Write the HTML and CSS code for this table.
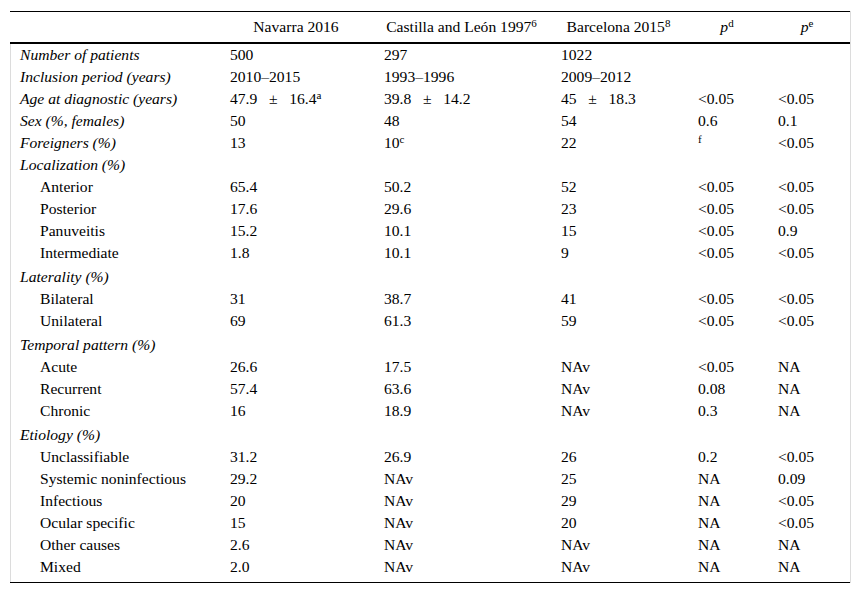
FILE: index.html
```html
<!DOCTYPE html>
<html>
<head>
<meta charset="utf-8">
<link rel="stylesheet" href="styles.css">
</head>
<body>
<div class="wrap">
<table class="data">
<colgroup>
<col class="c1"><col class="c2"><col class="c3"><col class="c4"><col class="c5"><col class="c6">
</colgroup>
<thead>
<tr>
<th></th>
<th>Navarra 2016</th>
<th>Castilla and León 1997<sup>6</sup></th>
<th>Barcelona 2015<sup>8</sup></th>
<th><i>p</i><sup>d</sup></th>
<th><i>p</i><sup>e</sup></th>
</tr>
</thead>
<tbody>
<tr><td class="lab">Number of patients</td><td>500</td><td>297</td><td>1022</td><td></td><td></td></tr>
<tr><td class="lab">Inclusion period (years)</td><td>2010–2015</td><td>1993–1996</td><td>2009–2012</td><td></td><td></td></tr>
<tr><td class="lab">Age at diagnostic (years)</td><td>47.9&ensp; ±&ensp; 16.4<sup>a</sup></td><td>39.8&ensp; ±&ensp; 14.2</td><td>45&ensp; ±&ensp; 18.3</td><td>&lt;0.05</td><td>&lt;0.05</td></tr>
<tr><td class="lab">Sex (%, females)</td><td>50</td><td>48</td><td>54</td><td>0.6</td><td>0.1</td></tr>
<tr><td class="lab">Foreigners (%)</td><td>13</td><td>10<sup>c</sup></td><td>22</td><td><sup>f</sup></td><td>&lt;0.05</td></tr>
<tr><td class="lab">Localization (%)</td><td></td><td></td><td></td><td></td><td></td></tr>
<tr><td class="sub">Anterior</td><td>65.4</td><td>50.2</td><td>52</td><td>&lt;0.05</td><td>&lt;0.05</td></tr>
<tr><td class="sub">Posterior</td><td>17.6</td><td>29.6</td><td>23</td><td>&lt;0.05</td><td>&lt;0.05</td></tr>
<tr><td class="sub">Panuveitis</td><td>15.2</td><td>10.1</td><td>15</td><td>&lt;0.05</td><td>0.9</td></tr>
<tr><td class="sub">Intermediate</td><td>1.8</td><td>10.1</td><td>9</td><td>&lt;0.05</td><td>&lt;0.05</td></tr>
<tr class="sec"><td class="lab">Laterality (%)</td><td></td><td></td><td></td><td></td><td></td></tr>
<tr><td class="sub">Bilateral</td><td>31</td><td>38.7</td><td>41</td><td>&lt;0.05</td><td>&lt;0.05</td></tr>
<tr><td class="sub">Unilateral</td><td>69</td><td>61.3</td><td>59</td><td>&lt;0.05</td><td>&lt;0.05</td></tr>
<tr class="sec"><td class="lab">Temporal pattern (%)</td><td></td><td></td><td></td><td></td><td></td></tr>
<tr><td class="sub">Acute</td><td>26.6</td><td>17.5</td><td>NAv</td><td>&lt;0.05</td><td>NA</td></tr>
<tr><td class="sub">Recurrent</td><td>57.4</td><td>63.6</td><td>NAv</td><td>0.08</td><td>NA</td></tr>
<tr><td class="sub">Chronic</td><td>16</td><td>18.9</td><td>NAv</td><td>0.3</td><td>NA</td></tr>
<tr class="sec"><td class="lab">Etiology (%)</td><td></td><td></td><td></td><td></td><td></td></tr>
<tr><td class="sub">Unclassifiable</td><td>31.2</td><td>26.9</td><td>26</td><td>0.2</td><td>&lt;0.05</td></tr>
<tr><td class="sub">Systemic noninfectious</td><td>29.2</td><td>NAv</td><td>25</td><td>NA</td><td>0.09</td></tr>
<tr><td class="sub">Infectious</td><td>20</td><td>NAv</td><td>29</td><td>NA</td><td>&lt;0.05</td></tr>
<tr><td class="sub">Ocular specific</td><td>15</td><td>NAv</td><td>20</td><td>NA</td><td>&lt;0.05</td></tr>
<tr><td class="sub">Other causes</td><td>2.6</td><td>NAv</td><td>NAv</td><td>NA</td><td>NA</td></tr>
<tr class="last"><td class="sub">Mixed</td><td>2.0</td><td>NAv</td><td>NAv</td><td>NA</td><td>NA</td></tr>
</tbody>
</table>
</div>
</body>
</html>
```
FILE: styles.css
```css
html, body {
  margin: 0;
  padding: 0;
  background: #fff;
}
body {
  font-family: "Liberation Serif", "Times New Roman", serif;
  font-size: 15.6px;
  color: #000;
}
.wrap {
  margin: 11px 0 0 10px;
  width: 840px;
  border-right: 1px solid #dcdcdc;
}
.data {
  width: 840px;
  border-collapse: collapse;
  table-layout: fixed;
  border-top: 1px solid #000;
  border-bottom: 1px solid #000;
  font-family: "Liberation Serif", "Times New Roman", serif;
  font-size: 15.6px;
}
.c1 { width: 212px; }
.c2 { width: 154px; }
.c3 { width: 177px; }
.c4 { width: 137px; }
.c5 { width: 80px; }
.c6 { width: 80px; }
.data thead tr {
  border-bottom: 2px solid #000;
}
.data th {
  font-family: "Liberation Serif", "Times New Roman", serif;
  font-weight: normal;
  height: 30px;
  padding: 0 12px 0 6px;
  text-align: center;
  vertical-align: middle;
  white-space: nowrap;
  line-height: 18px;
}
.data td {
  font-family: "Liberation Serif", "Times New Roman", serif;
  height: 22px;
  padding: 0 8px;
  line-height: 22px;
  vertical-align: middle;
  white-space: nowrap;
}
.data tbody td:first-child {
  box-shadow: inset 1px 0 0 #dcdcdc;
}
.data td.lab {
  font-style: italic;
  padding-left: 10px;
}
.data td.sub {
  padding-left: 30px;
}
.data tr.sec td {
  height: 22px;
  padding-top: 2px;
}
.data tr.last td {
  height: 22px;
  padding-bottom: 4px;
}
sup {
  font-size: 11px;
  line-height: 0;
  vertical-align: 5px;
}
```
